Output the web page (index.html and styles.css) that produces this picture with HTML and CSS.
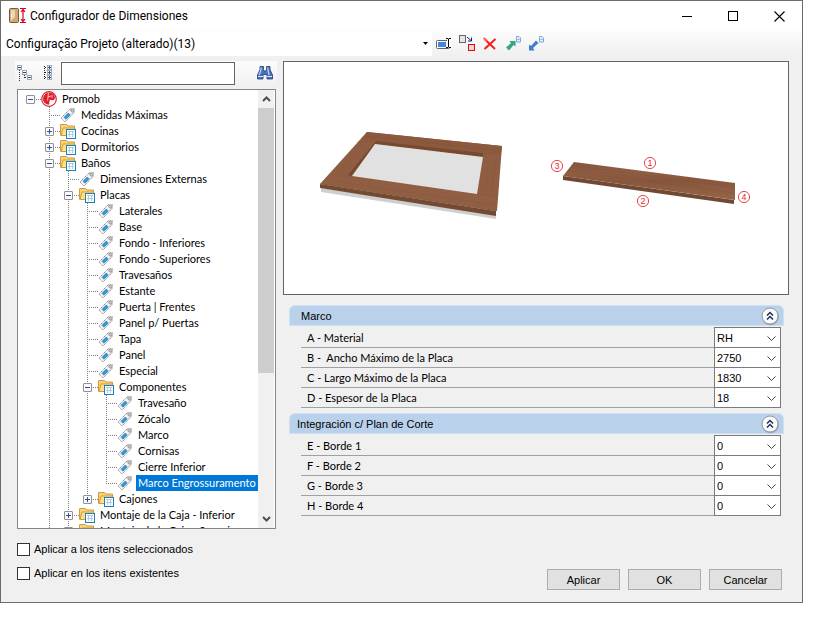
FILE: index.html
```html
<!DOCTYPE html>
<html lang="es">
<head>
	<meta charset="UTF-8">
	<title>Configurador de Dimensiones</title>
	<link rel="stylesheet" href="styles.css">
</head>
<body>
	<svg class="defs" width="0" height="0" aria-hidden="true">
		<symbol id="tag" viewBox="0 0 16 16">
			<path d="M1.500 10.500L10.500 1.500H14.500V5L5.500 14.500L4.500 14.500L1.500 11.500Z" fill="#f4f4f4" stroke="#8a8a8a" stroke-dasharray="1.500 .6"/>
			<path d="M10 2L11 1H15V5L13.500 6.500L9.500 2.500Z" fill="#c4c4c4"/>
			<circle cx="12.200" cy="3.800" r="1.200" fill="#fff" stroke="#777" stroke-width=".8"/>
			<path d="M4 10.300L8.300 6L10.200 7.900L5.900 12.200Z" fill="#2b9bdc" stroke="#1673ae" stroke-width=".6"/>
		</symbol>
		<symbol id="folder" viewBox="0 0 16 16">
			<path d="M.5 12.500V1.500H6.500L8 3H14.500V6" fill="#f8d37c" stroke="#d79a35"/>
			<path d="M1 12.500L3 5H15L13 12.500Z" fill="#fde08a" stroke="#d79a35"/>
			<rect x="6.500" y="6.500" width="9" height="9" fill="#fff" stroke="#1c7fba"/>
			<path d="M8 8.500H14M8 11.500H14M9.500 8V14M12.500 8V14" stroke="#a9cdea" fill="none"/>
		</symbol>
		<symbol id="promob" viewBox="0 0 16 16">
			<circle cx="8" cy="8" r="7.300" fill="#fff" stroke="#cf2d36" stroke-width="1.200"/>
			<path d="M7 1.800C10 1 13 2.500 13.800 5.500C14.500 8 13 9.500 11 9.200L8.800 8.800L8 13.800C4.500 13.500 2 11 2 8C2 5 4 2.500 7 1.800Z" fill="#e11f2b"/>
			<path d="M7.500 2L7 6L10 5M7 6L6.500 9.500M11 4V7" stroke="#fff" stroke-width=".7" fill="none"/>
		</symbol>
		<symbol id="up" viewBox="0 0 20 20">
			<circle cx="10.500" cy="11" r="8.500" fill="#8495ad" opacity=".6"/>
			<circle cx="10" cy="10" r="8" fill="#fafafa" stroke="#9298a5"/>
			<path d="M7 9.500L10 6.500L13 9.500M7 13.500L10 10.500L13 13.500" fill="none" stroke="#1c3260" stroke-width="1.500"/>
		</symbol>
	</svg>

	<div class="window">
		<header class="titlebar">
			<svg class="app-icon" width="18" height="16" viewBox="0 0 18 16">
				<rect x=".5" y=".5" width="9" height="14" rx="1" fill="#cfaa79" stroke="#765b3b"/>
				<path d="M2 2H6V9L2 13Z" fill="#ecd5b3"/>
				<path d="M2.500 6V9" stroke="#fff"/>
				<path d="M11 .5H17M11 14.500H17M14 1V14M12 4L14 1.500L16 4M12 11L14 13.500L16 11" fill="none" stroke="#d9001b" stroke-width="1.200"/>
			</svg>
			<h1>Configurador de Dimensiones</h1>
			<div class="win-buttons">
				<button aria-label="Minimizar"><svg width="11" height="11" viewBox="0 0 11 11"><path d="M0 5.500H10" stroke="#000"/></svg></button>
				<button aria-label="Maximizar"><svg width="11" height="11" viewBox="0 0 11 11"><rect x=".5" y=".5" width="9" height="9" fill="none" stroke="#000"/></svg></button>
				<button aria-label="Cerrar"><svg width="11" height="11" viewBox="0 0 11 11"><path d="M.5 .5L10.500 10.500M10.500 .5L.5 10.500" stroke="#000" stroke-width="1.100"/></svg></button>
			</div>
		</header>

		<div class="toolbar">
			<select class="config" aria-label="Configuración">
				<option>Configuração Projeto (alterado)(13)</option>
			</select>
			<div class="tools">
				<button aria-label="Renombrar"><svg width="17" height="16" viewBox="0 0 17 16">
					<rect x=".5" y="4.500" width="13" height="8" rx="1" fill="#fff" stroke="#60656e"/>
					<rect x="2" y="6" width="8" height="5" fill="#4685e8"/>
					<rect x="11" y="2" width="4" height="10" fill="#fff"/>
					<path d="M10 2.500H12L12.500 3L13 2.500H15M12.500 3V11M10 11.500H12L12.500 11L13 11.500H15" stroke="#111" fill="none"/>
				</svg></button>
				<button aria-label="Duplicar"><svg width="17" height="17" viewBox="0 0 17 17">
					<rect x=".5" y=".5" width="6" height="7" fill="#e4e4e4" stroke="#666"/>
					<path d="M8 2L12 5.500M12.500 2.500V6H9" stroke="#102080" fill="none"/>
					<rect x="9.500" y="9.500" width="6" height="6" fill="#ddd" stroke="#f20000"/>
				</svg></button>
				<button aria-label="Eliminar"><svg width="17" height="16" viewBox="0 0 17 16">
					<path d="M2.500 3L13 13M13.500 3L2.500 13" stroke="#f21d1d" stroke-width="2"/>
					<path d="M1.500 2L5 5" stroke="#f66" stroke-width="2"/>
				</svg></button>
				<button aria-label="Exportar"><svg width="17" height="17" viewBox="0 0 17 17">
					<path d="M1 12.500L6 8L4.500 6H10.500V11.500L8.500 10L4 15.500Z" fill="#31a87e"/>
					<path d="M11.500 1.500H14L15.500 3V7H11.500ZM12.500 4.500H14.500" fill="#e9f2fc" stroke="#7ba8db"/>
				</svg></button>
				<button aria-label="Importar"><svg width="17" height="17" viewBox="0 0 17 17">
					<path d="M1 15.500V9.500L3 11L8 5.500L10.500 8L5 13L6.500 15.500Z" fill="#3e7dcc"/>
					<path d="M11.500 1.500H14L15.500 3V7H11.500ZM12.500 4.500H14.500" fill="#e9f2fc" stroke="#7ba8db"/>
				</svg></button>
			</div>
		</div>

		<main class="content">
			<section class="left">
				<div class="searchbar">
					<button aria-label="Contraer todo"><svg width="16" height="16" viewBox="0 0 16 16" shape-rendering="crispEdges">
						<path d="M2.500 5V16" stroke="#333" stroke-dasharray="1 1"/>
						<path d="M5 7.500H8M7.500 10V14M8 12.500H11" stroke="#333" stroke-dasharray="1 1"/>
						<path d="M.5 .5H4.500V4.500H.5ZM5.500 5.500H9.500V9.500H5.500ZM10.500 10.500H14.500V14.500H10.500Z" fill="#fff" stroke="#9aa4b2"/>
						<path d="M1 2.500H4M6 7.500H9M11 12.500H14" stroke="#2b4a80"/>
					</svg></button>
					<button aria-label="Expandir todo"><svg width="16" height="16" viewBox="-2 0 16 16" shape-rendering="crispEdges">
						<path d="M3.500 1V15" stroke="#222" stroke-dasharray="1 1"/>
						<path d="M4 2.500H7M4 7.500H7M4 12.500H7" stroke="#222" stroke-dasharray="1 1"/>
						<path d="M6.500 .5H10.500V4.500H6.500ZM6.500 5.500H10.500V9.500H6.500ZM6.500 10.500H10.500V14.500H6.500Z" fill="#fff" stroke="#a4acb8"/>
						<path d="M7 2.500H10M8.500 1V4M7 7.500H10M8.500 6V9M7 12.500H10M8.500 11V14" stroke="#3c5888"/>
					</svg></button>
					<input type="text" aria-label="Buscar">
					<button aria-label="Buscar"><svg width="16" height="16" viewBox="0 0 16 16">
						<path d="M3 1.500H6.500V4.500L7 6H9L9.500 4.500V1.500H13V4.500L15.500 10V14H10V9.500H6V14H.5V10L3 4.500Z" fill="#4a70b5" stroke="#213f7d" stroke-width=".8"/>
						<path d="M4 2.500V5L2 10M11 2.500V5L12 10" stroke="#b7d0f5" stroke-width="1.300" fill="none"/>
						<path d="M1 11.500H6M10 11.500H15" stroke="#dbe8fb"/>
					</svg></button>
				</div>

				<div class="tree-box">
					<ul class="tree">
						<li class="root">
							<div class="node"><button class="toggle" aria-label="Contraer"></button><svg><use href="#promob"/></svg><span>Promob</span></div>
							<ul>
								<li><div class="node"><svg><use href="#tag"/></svg><span>Medidas Máximas</span></div></li>
								<li><div class="node"><button class="toggle plus" aria-label="Expandir"></button><svg><use href="#folder"/></svg><span>Cocinas</span></div></li>
								<li><div class="node"><button class="toggle plus" aria-label="Expandir"></button><svg><use href="#folder"/></svg><span>Dormitorios</span></div></li>
								<li class="more">
									<div class="node"><button class="toggle" aria-label="Contraer"></button><svg><use href="#folder"/></svg><span>Baños</span></div>
									<ul>
										<li><div class="node"><svg><use href="#tag"/></svg><span>Dimensiones Externas</span></div></li>
										<li>
											<div class="node"><button class="toggle" aria-label="Contraer"></button><svg><use href="#folder"/></svg><span>Placas</span></div>
											<ul>
												<li><div class="node"><svg><use href="#tag"/></svg><span>Laterales</span></div></li>
												<li><div class="node"><svg><use href="#tag"/></svg><span>Base</span></div></li>
												<li><div class="node"><svg><use href="#tag"/></svg><span>Fondo - Inferiores</span></div></li>
												<li><div class="node"><svg><use href="#tag"/></svg><span>Fondo - Superiores</span></div></li>
												<li><div class="node"><svg><use href="#tag"/></svg><span>Travesaños</span></div></li>
												<li><div class="node"><svg><use href="#tag"/></svg><span>Estante</span></div></li>
												<li><div class="node"><svg><use href="#tag"/></svg><span>Puerta | Frentes</span></div></li>
												<li><div class="node"><svg><use href="#tag"/></svg><span>Panel p/ Puertas</span></div></li>
												<li><div class="node"><svg><use href="#tag"/></svg><span>Tapa</span></div></li>
												<li><div class="node"><svg><use href="#tag"/></svg><span>Panel</span></div></li>
												<li><div class="node"><svg><use href="#tag"/></svg><span>Especial</span></div></li>
												<li>
													<div class="node"><button class="toggle" aria-label="Contraer"></button><svg><use href="#folder"/></svg><span>Componentes</span></div>
													<ul>
														<li><div class="node"><svg><use href="#tag"/></svg><span>Travesaño</span></div></li>
														<li><div class="node"><svg><use href="#tag"/></svg><span>Zócalo</span></div></li>
														<li><div class="node"><svg><use href="#tag"/></svg><span>Marco</span></div></li>
														<li><div class="node"><svg><use href="#tag"/></svg><span>Cornisas</span></div></li>
														<li><div class="node"><svg><use href="#tag"/></svg><span>Cierre Inferior</span></div></li>
														<li><div class="node selected"><svg><use href="#tag"/></svg><span>Marco Engrossuramento</span></div></li>
													</ul>
												</li>
												<li><div class="node"><button class="toggle plus" aria-label="Expandir"></button><svg><use href="#folder"/></svg><span>Cajones</span></div></li>
											</ul>
										</li>
										<li><div class="node"><button class="toggle plus" aria-label="Expandir"></button><svg><use href="#folder"/></svg><span>Montaje de la Caja - Inferior</span></div></li>
										<li class="more"><div class="node"><button class="toggle plus" aria-label="Expandir"></button><svg><use href="#folder"/></svg><span>Montaje de la Caja - Superior</span></div></li>
									</ul>
								</li>
							</ul>
						</li>
					</ul>
					<div class="scrollbar">
						<button aria-label="Subir"><svg width="9" height="6" viewBox="0 0 9 6"><path d="M1 5L4.500 1.500L8 5" fill="none" stroke="#505050" stroke-width="2"/></svg></button>
						<div class="track"><div class="thumb"></div></div>
						<button aria-label="Bajar"><svg width="9" height="6" viewBox="0 0 9 6"><path d="M1 1L4.500 4.500L8 1" fill="none" stroke="#505050" stroke-width="2"/></svg></button>
					</div>
				</div>
			</section>

			<section class="right">
				<div class="preview">
					<svg viewBox="284 62 504 232" role="img" aria-label="Marco">
						<defs>
							<linearGradient id="wood" x1="0" y1="0" x2="0.1" y2="1">
								<stop offset="0" stop-color="#84563e"/>
								<stop offset=".3" stop-color="#8f5d42"/>
								<stop offset=".55" stop-color="#87573d"/>
								<stop offset="1" stop-color="#946246"/>
							</linearGradient>
						</defs>
						<!-- marco -->
						<path d="M321 188L496 215V219L321 192Z" fill="#cfcfcf"/>
						<path d="M367 132L502 146L497 211L320 184Z" fill="#8f5d42"/>
						<path d="M367 132L502 146L501 154L361 139Z" fill="#8a593e"/>
						<path d="M336 176L497 196L496 211L320 184Z" fill="#905e42"/>
						<path d="M320 184L496 211V216L320 188Z" fill="#744a33"/>
						<path d="M376 141L483 153V157L375 144L352 176L348 175Z" fill="#77492f"/>
						<path d="M375 144L483 157L477 194L352 176Z" fill="#e1e1e1"/>
						<path d="M365 136L500 150M357 142L375 141M345 160L360 146M342 169L355 155M484 153L501 155M336 176L352 176M478 193L497 197M334 181L495 205M488 160L486 190M495 160L492 192" stroke="#7f5038" stroke-width=".6" fill="none" opacity=".5"/>
						<!-- borde -->
						<path d="M574 162L735 183V200L563 176Z" fill="url(#wood)"/>
						<path d="M563 176L734 200V204L563 180Z" fill="#714832"/>
						<path d="M574 166L733 187M569 171L734 193M577 169L700 186" stroke="#7f5038" stroke-width=".6" opacity=".5"/>
						<g fill="none" stroke="#e8474c">
							<circle cx="557" cy="166" r="5.600"/>
							<circle cx="650" cy="163" r="5.600"/>
							<circle cx="643" cy="201" r="5.600"/>
							<circle cx="744" cy="197" r="5.600"/>
						</g>
						<g class="marks">
							<text x="557" y="169">3</text>
							<text x="650" y="166">1</text>
							<text x="643" y="204">2</text>
							<text x="744" y="200">4</text>
						</g>
					</svg>
				</div>

				<div class="group">
					<div class="group-head indent">
						<h2>Marco</h2>
						<button aria-label="Contraer Marco"><svg width="20" height="20"><use href="#up"/></svg></button>
					</div>
					<div class="rows">
						<div class="row"><label for="a">A - Material</label><select id="a"><option>RH</option></select></div>
						<div class="row"><label for="b">B -&nbsp; Ancho Máximo de la Placa</label><select id="b"><option>2750</option></select></div>
						<div class="row"><label for="c">C - Largo Máximo de la Placa</label><select id="c"><option>1830</option></select></div>
						<div class="row"><label for="d">D - Espesor de la Placa</label><select id="d"><option>18</option></select></div>
					</div>
				</div>
				<div class="group">
					<div class="group-head">
						<h2>Integración c/ Plan de Corte</h2>
						<button aria-label="Contraer Integración"><svg width="20" height="20"><use href="#up"/></svg></button>
					</div>
					<div class="rows">
						<div class="row"><label for="e">E - Borde 1</label><select id="e"><option>0</option></select></div>
						<div class="row"><label for="f">F - Borde 2</label><select id="f"><option>0</option></select></div>
						<div class="row"><label for="g">G - Borde 3</label><select id="g"><option>0</option></select></div>
						<div class="row"><label for="h">H - Borde 4</label><select id="h"><option>0</option></select></div>
					</div>
				</div>
			</section>
		</main>

		<footer class="footer">
			<div class="checks">
				<label><input type="checkbox">Aplicar a los itens seleccionados</label>
				<label><input type="checkbox">Aplicar en los itens existentes</label>
			</div>
			<div class="actions">
				<button>Aplicar</button>
				<button>OK</button>
				<button>Cancelar</button>
			</div>
		</footer>
	</div>
</body>
</html>
```
FILE: styles.css
```css
*{
	box-sizing: border-box;
}
body{
	margin: 0;
	height: 100vh;
	padding: 0 28px 14px 0;
	background-color: #fff;
	color: #000;
	font: 11px/16px "Liberation Sans", Arial, sans-serif;
}
.defs{
	position: absolute;
}
h1, h2, ul{
	margin: 0;
	padding: 0;
	font-weight: normal;
}
ul{
	list-style: none;
}
svg{
	display: block;
}
button, input, select{
	font: inherit;
	color: inherit;
	margin: 0;
	padding: 0;
	border: none;
	border-radius: 0;
	background: none;
}
select{
	appearance: none;
}
.window{
	display: flex;
	flex-direction: column;
	height: 100%;
	border: 1px solid #6b6b6b;
	background-color: #f0f0f0;
}

/* title */
.titlebar{
	display: flex;
	align-items: center;
	height: 30px;
	padding-left: 8px;
	background-color: #fff;
}
.titlebar h1{
	flex: 1;
	padding-left: 3px;
	font: 12px/16px Roboto, "Noto Sans", sans-serif;
}
.win-buttons{
	display: flex;
}
.win-buttons button{
	display: flex;
	align-items: center;
	justify-content: center;
	width: 46px;
	height: 30px;
}

/* toolbar */
.toolbar{
	display: flex;
	align-items: center;
	height: 25px;
	background: linear-gradient(#fcfcfc, #f0f0f0);
}
.config{
	flex: 0 1 431px;
	height: 24px;
	padding-left: 5px;
	font: 12px/16px Roboto, "Noto Sans", sans-serif;
	background: #fff url("data:image/svg+xml,%3Csvg xmlns='http://www.w3.org/2000/svg' width='5' height='3'%3E%3Cpath d='M0 0H5L2.500 3Z'/%3E%3C/svg%3E") no-repeat right 4px center;
}
.tools{
	display: flex;
	gap: 6px;
	padding-left: 4px;
}

/* left */
.content{
	display: flex;
	flex: 1;
	gap: 6px;
	min-height: 0;
	padding: 5px 13px 0 14px;
}
.left{
	display: flex;
	flex-direction: column;
	flex: 0 0 262px;
	min-width: 0;
	gap: 4px;
}
.searchbar{
	display: flex;
	align-items: center;
	gap: 6px;
	height: 24px;
	padding: 0 4px 0 2px;
	background: linear-gradient(#fcfcfc, #f1f1f1);
}
.searchbar input{
	width: 174px;
	height: 23px;
	padding: 0 4px;
	margin-right: auto;
	border: 1px solid #646464;
	background-color: #fff;
}
.tree-box{
	display: flex;
	flex: 1;
	min-height: 0;
	margin: 0 1px 0 2px;
	padding-right: 1px;
	overflow: hidden;
	border: 1px solid #828790;
	background-color: #fff;
}
.tree{
	flex: 1;
	min-width: 0;
	padding-top: 1px;
	font-family: Lato, "Liberation Sans", sans-serif;
}
.tree li li{
	margin-left: 19px;
	background: repeating-linear-gradient(#808080 0 1px, transparent 1px 2px) no-repeat 12px 0 / 1px 100%;
}
.tree li li:last-child{
	background-size: 1px 8px;
}
.tree li li.more{
	background-size: 1px 100%;
}
.node{
	display: flex;
	align-items: center;
	height: 16px;
	white-space: nowrap;
	background: repeating-linear-gradient(90deg, #808080 0 1px, transparent 1px 2px) no-repeat 12px 8px / 11px 1px;
}
.node svg{
	flex: none;
	width: 16px;
	height: 16px;
	margin-left: 23px;
}
.toggle{
	flex: none;
	width: 9px;
	height: 9px;
	margin-left: 8px;
	border: 1px solid #919191;
	border-radius: 1px;
	background: linear-gradient(#2f4f9e, #2f4f9e) no-repeat center / 5px 1px #fafafa;
}
.toggle.plus{
	background: linear-gradient(#2f4f9e, #2f4f9e) no-repeat center / 5px 1px, linear-gradient(#2f4f9e, #2f4f9e) no-repeat center / 1px 5px #fafafa;
}
.toggle + svg{
	margin-left: 6px;
}
.node span{
	margin-left: 3px;
	padding: 0 2px;
}
.selected span{
	background-color: #0078d7;
	color: #fff;
}
.scrollbar{
	display: flex;
	flex-direction: column;
	flex: 0 0 16px;
	background-color: #f0f0f0;
}
.scrollbar button{
	display: flex;
	align-items: center;
	justify-content: center;
	height: 18px;
}
.track{
	flex: 1;
}
.thumb{
	height: 66%;
	background-color: #cdcdcd;
}

/* right */
.right{
	flex: 1;
	min-width: 0;
}
.preview{
	margin-bottom: 10px;
	border: 1px solid #646464;
	background-color: #fff;
}
.preview svg{
	width: 100%;
}
.marks{
	fill: #e0282e;
	font-size: 9px;
	text-anchor: middle;
}
.group{
	margin: 0 5px 5px 6px;
}
.group-head{
	display: flex;
	align-items: center;
	justify-content: space-between;
	height: 21px;
	padding: 0 3px 0 7px;
	border: 1px solid #cfe0f2;
	border-radius: 6px 6px 0 0;
	background-color: #b9d1ea;
}
.group-head.indent{
	padding-left: 11px;
}
.group-head h2{
	font-size: 11px;
}
.rows{
	padding: 2px 3px 0 12px;
}
.row{
	display: flex;
	height: 20px;
}
.row label{
	flex: 1;
	padding: 2px 0 0 6px;
	border-bottom: 1px solid #a0a0a0;
	font-family: Lato, "Liberation Sans", sans-serif;
}
.row select{
	width: 67px;
	height: 21px;
	margin-top: -1px;
	padding: 0 18px 0 2px;
	border: 1px solid #7a7a7a;
	background: #fff url("data:image/svg+xml,%3Csvg xmlns='http://www.w3.org/2000/svg' width='9' height='6'%3E%3Cpath d='M.5 .5L4.500 4.500L8.500 .5' fill='none' stroke='%23444'/%3E%3C/svg%3E") no-repeat right 4px top 8px;
}

/* footer */
.footer{
	display: flex;
	align-items: flex-end;
	justify-content: space-between;
	padding: 12px 20px 12px 16px;
}
.checks{
	display: flex;
	flex-direction: column;
	gap: 8px;
	padding-bottom: 9px;
}
.checks label{
	display: flex;
	align-items: center;
	gap: 4px;
}
.checks input{
	appearance: none;
	width: 13px;
	height: 13px;
	border: 1px solid #333;
	background-color: #fff;
}
.checks input:checked{
	background-color: #0078d7;
}
.actions{
	display: flex;
	gap: 8px;
}
.actions button{
	width: 73px;
	height: 21px;
	border: 1px solid #adadad;
	background-color: #e1e1e1;
}
```
